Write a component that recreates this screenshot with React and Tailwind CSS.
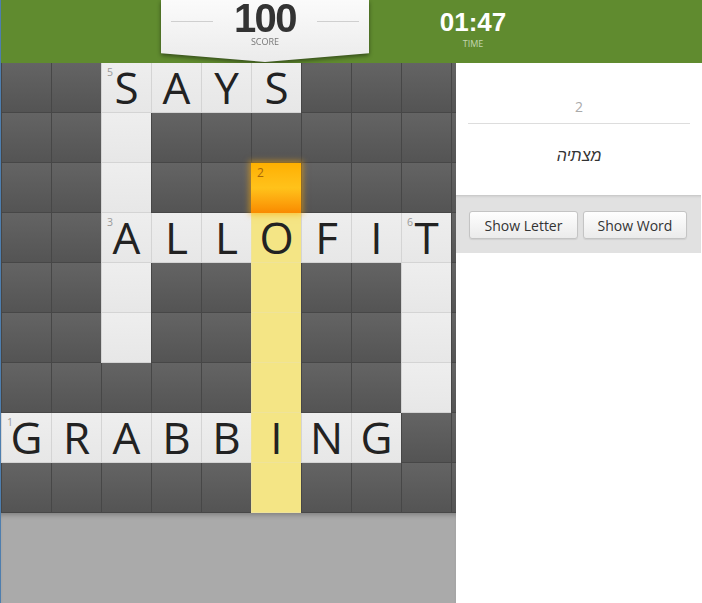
import React from "react";

const ROWS = [
  "..SAYS....",
  ".._.......",
  ".._..#....",
  "..ALLoFIT.",
  ".._..*.._.",
  ".._..*.._.",
  ".....*.._.",
  "GRABBiNG..",
  ".....*....",
];

const NUMS = { "0,2": 5, "2,5": 2, "3,2": 3, "3,8": 6, "7,0": 1 };

function Cell({ ch, num }) {
  if (ch === ".") {
    return (
      <div className="box-border w-[50px] h-[50px] border-l border-b border-[#474747] bg-gradient-to-b from-[#646464] to-[#545454]" />
    );
  }
  if (ch === "#") {
    return (
      <div className="relative z-10 box-border w-[50px] h-[50px] bg-gradient-to-b from-[#ffb000] via-[#ffc21a] to-[#f98a00] shadow-[0_0_6px_2px_rgba(255,170,0,0.55)]">
        <span className="absolute left-[6px] top-[4px] text-[12px] leading-none text-[#a8670a] font-['Open_Sans',sans-serif]">
          {num}
        </span>
      </div>
    );
  }
  const yellow = ch === "*" || (ch >= "a" && ch <= "z");
  const letter = ch === "_" || ch === "*" ? "" : ch.toUpperCase();
  return (
    <div
      className={
        "relative box-border w-[50px] h-[50px] border-l border-b flex items-center justify-center " +
        (yellow
          ? "bg-[#f4e585] border-[#efe39a]"
          : "bg-gradient-to-b from-[#eeeeee] to-[#e7e7e7] border-[#d4d4d4]")
      }
    >
      {num ? (
        <span className="absolute left-[5px] top-[4px] text-[10.5px] leading-none text-[#9a9a9a] font-['Open_Sans',sans-serif]">
          {num}
        </span>
      ) : null}
      <span className="text-[44px] leading-none text-[#222] font-['Open_Sans',sans-serif] -mt-[2px]">
        {letter}
      </span>
    </div>
  );
}

export default function App() {
  return (
    <div className="w-[702px] h-[603px] overflow-hidden border-l border-[#4e7eae] bg-white flex flex-col font-['Open_Sans',sans-serif]">
      {/* header */}
      <div className="h-[63px] shrink-0 bg-[#608b2f] flex items-start">
        <div className="ml-[160px] w-[208px] h-[62px] drop-shadow-[0_2px_2px_rgba(0,0,0,0.45)]">
          <div className="w-full h-full bg-gradient-to-b from-[#fbfbfb] to-[#ebebeb] [clip-path:polygon(0_0,100%_0,100%_86%,50%_100%,0_86%)] flex flex-col items-center">
            <div className="flex items-start gap-[21px] -mt-[2px]">
              <div className="w-[42px] h-px bg-[#cfcfcf] mt-[23px]" />
              <span className="text-[40px] leading-none font-bold text-[#333] tracking-[-1.5px] font-['Liberation_Sans',Arial,sans-serif]">
                100
              </span>
              <div className="w-[42px] h-px bg-[#cfcfcf] mt-[23px]" />
            </div>
            <span className="text-[9px] leading-none text-[#777] -mt-[1px]">SCORE</span>
          </div>
        </div>
        <div className="ml-[64px] w-[80px] flex flex-col items-center pt-[9px]">
          <span className="text-[26px] leading-none font-bold text-white font-['Liberation_Sans',Arial,sans-serif]">
            01:47
          </span>
          <span className="text-[9px] leading-none text-[#c3d6b0] mt-[4px]">TIME</span>
        </div>
      </div>

      {/* body */}
      <div className="flex flex-1 min-h-0">
        <div className="w-[455px] shrink-0 flex flex-col">
          <div className="w-[455px] h-[450px] overflow-hidden">
            <div className="grid grid-cols-[repeat(10,50px)] w-[500px]">
              {ROWS.map((row, r) =>
                row.split("").map((ch, c) => (
                  <Cell key={r + "-" + c} ch={ch} num={NUMS[r + "," + c]} />
                ))
              )}
            </div>
          </div>
          <div className="flex-1 bg-[#aaaaaa] shadow-[inset_0_5px_5px_-3px_rgba(0,0,0,0.25)]" />
        </div>

        <div className="flex-1 flex flex-col bg-white">
          <div className="px-[12px] pt-[34px] pb-[28px] flex flex-col items-center">
            <span className="text-[14px] leading-[20px] text-[#aaa]">2</span>
            <div className="w-full h-px bg-[#dddddd] mt-[6px]" />
            <span
              dir="rtl"
              className="mt-[21px] text-[16px] leading-[22px] italic text-[#333] font-['Liberation_Sans',Arial,sans-serif]"
            >
              מצתיה
            </span>
          </div>
          <div className="mr-[1px] h-[58px] bg-[#e1e1e1] shadow-[inset_0_3px_3px_-2px_rgba(0,0,0,0.15)] flex items-start gap-[5px] pl-[13px] pt-[16px]">
            <button className="h-[28px] w-[109px] rounded-[3px] border border-[#c4c4c4] bg-gradient-to-b from-[#fefefe] to-[#ebebeb] text-[14px] text-[#333] shadow-[0_1px_1px_rgba(0,0,0,0.08)]">
              Show Letter
            </button>
            <button className="h-[28px] w-[104px] rounded-[3px] border border-[#c4c4c4] bg-gradient-to-b from-[#fefefe] to-[#ebebeb] text-[14px] text-[#333] shadow-[0_1px_1px_rgba(0,0,0,0.08)]">
              Show Word
            </button>
          </div>
        </div>
      </div>
    </div>
  );
}
